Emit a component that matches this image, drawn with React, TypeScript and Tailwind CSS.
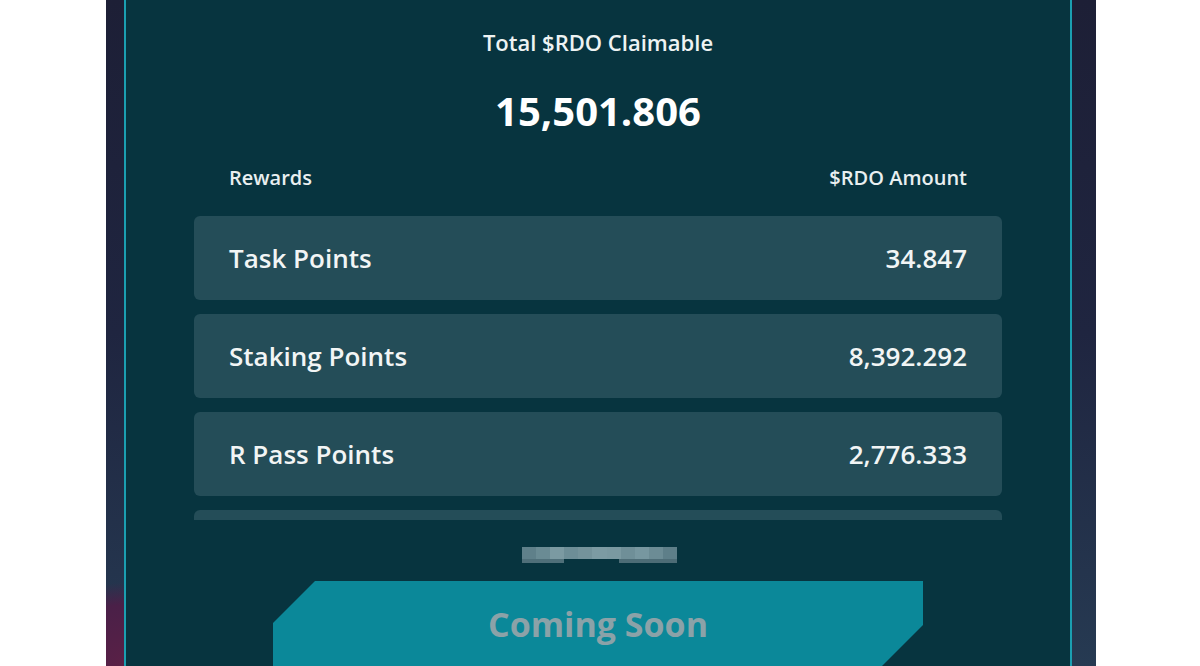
import React from "react";

const rows = [
  { label: "Task Points", value: "34.847" },
  { label: "Staking Points", value: "8,392.292" },
  { label: "R Pass Points", value: "2,776.333" },
  { label: "Referral Points", value: "4,298.334" },
];

const mosaic = ["#5f808a", "#6a8b94", "#7b9aa2", "#6d8e97", "#74939b", "#7c9ba3", "#7a99a1", "#6f8f98", "#7797a0", "#6c8c95", "#5e7f89"];

export default function App() {
  return (
    <div className="w-[1200px] h-[666px] overflow-hidden bg-white flex pl-[106px]" style={{ fontFamily: '"Open Sans", "Noto Sans", sans-serif' }}>
      <div className="w-[990px] h-full flex pl-[18px] pr-[24px] bg-[linear-gradient(180deg,#1d1f36_0%,#1f2540_50%,#263a52_100%)] relative">
        <div className="absolute left-0 bottom-0 w-[18px] h-[110px] bg-[radial-gradient(circle_at_100%_100%,#5a2046_0%,#4a2048_55%,transparent_75%)]" />
        <div className="relative flex-1 h-full bg-[#07343f] border-x-2 border-[#1b9fb1] flex flex-col items-center px-[68px]">
          <div className="shrink-0 pt-[27px] text-[22px] leading-[30px] font-semibold text-[#eef3f3]">Total $RDO Claimable</div>
          <div className="shrink-0 mt-[29px] text-[40px] leading-[50px] font-bold text-white">15,501.806</div>
          <div className="shrink-0 mt-[29px] w-full flex justify-between px-[35px] text-[20px] leading-[26px] font-semibold text-[#e9eff0]">
            <span>Rewards</span>
            <span>$RDO Amount</span>
          </div>
          <div className="shrink-0 mt-[25px] w-full h-[304px] overflow-hidden flex flex-col gap-[14px]">
            {rows.map((r) => (
              <div key={r.label} className="shrink-0 h-[84px] rounded-[6px] bg-[#244d58] flex items-center justify-between px-[35px] text-[26px] font-semibold text-[#f2f5f5]">
                <span>{r.label}</span>
                <span>{r.value}</span>
              </div>
            ))}
          </div>
          <div className="shrink-0 mt-[27px] ml-[3px] w-[155px] h-[16px] flex flex-col">
            <div className="flex h-[12px]">
              {mosaic.map((c, i) => (
                <div key={i} className="flex-1" style={{ background: c }} />
              ))}
            </div>
            <div className="flex h-[4px]">
              <div className="w-[42px] bg-[#4f6f79]" />
              <div className="flex-1" />
              <div className="w-[58px] bg-[#4d6c76]" />
            </div>
          </div>
          <div className="shrink-0 mt-[18px] w-[650px] h-[100px] bg-[#0b8899] [clip-path:polygon(42px_0,100%_0,100%_44px,calc(100%-56px)_100px,0_100px,0_42px)] flex justify-center">
            <span className="pt-[21px] text-[34px] leading-[44px] font-bold text-[#8ba2a8]">Coming Soon</span>
          </div>
        </div>
      </div>
    </div>
  );
}
